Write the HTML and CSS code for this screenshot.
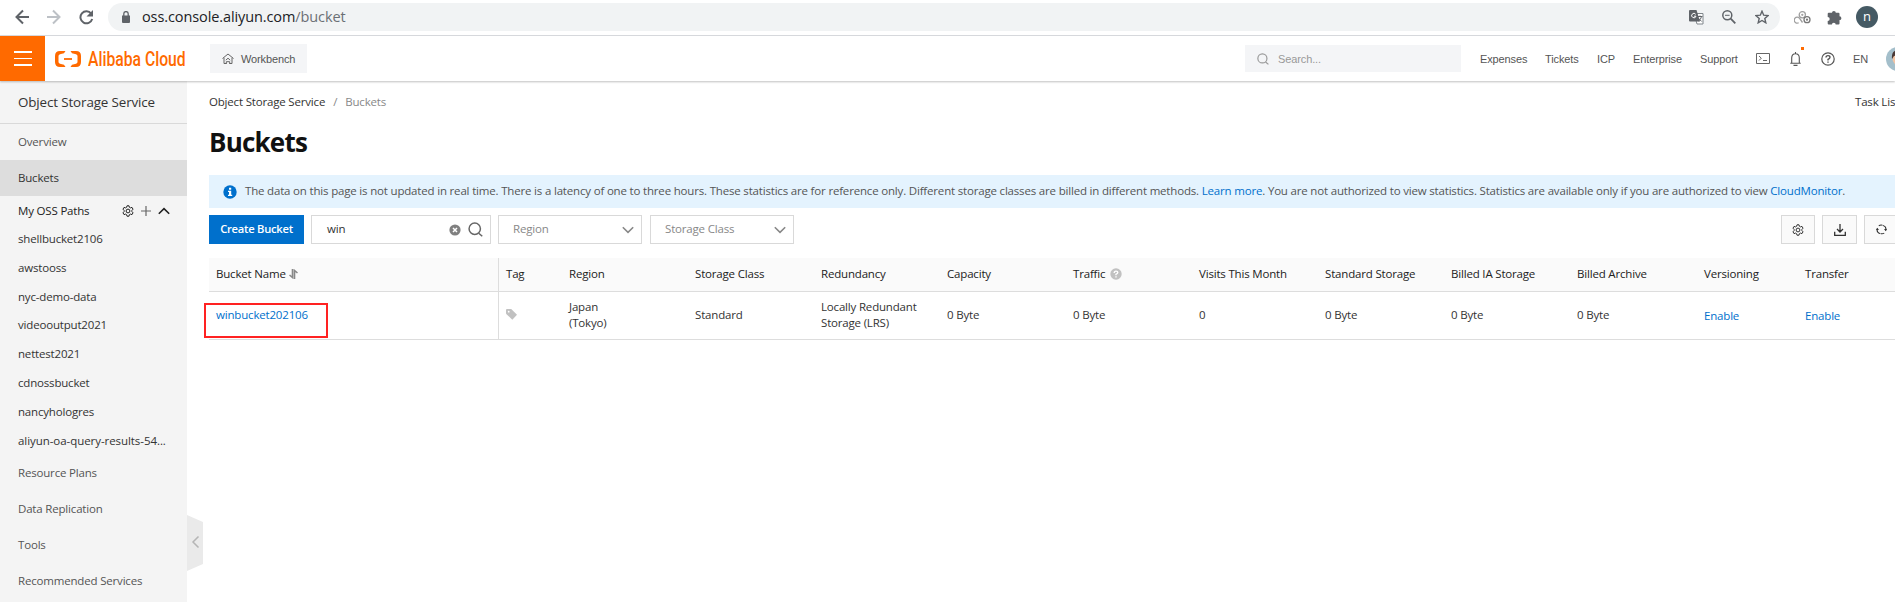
FILE: index.html
```html
<!DOCTYPE html>
<html lang="en">
<head>
<meta charset="utf-8">
<title>Object Storage Service</title>
<link rel="stylesheet" href="styles.css">
</head>
<body>
<svg class="defs" width="0" height="0">
  <symbol id="gear" viewBox="0 0 12 12"><path fill="none" stroke="currentColor" stroke-width="1" stroke-linejoin="round" d="M5 .8h2l.4 1.5 1 .6 1.600-.5 1 1.800L9.900 5.400v1.200L11 7.800l-1 1.800-1.600-.5-1 .6L7 11.200H5l-.4-1.500-1-.6-1.600.5-1-1.800 1.100-1.200V5.400L1 4.200l1-1.800 1.600.5 1-.6z"/><circle cx="6" cy="6" r="1.900" fill="none" stroke="currentColor" stroke-width="1"/></symbol>
  <symbol id="chev" viewBox="0 0 12 8"><path fill="none" stroke="currentColor" stroke-width="1.600" d="M.8 1.200 6 6.400l5.200-5.200"/></symbol>
  <symbol id="search" viewBox="0 0 14 14"><circle cx="6.300" cy="6.300" r="5.300" fill="none" stroke="currentColor" stroke-width="1.400"/><path stroke="currentColor" stroke-width="1.400" d="m10 10.500 3.300 2.800"/></symbol>
</svg>

<div class="browser">
  <svg class="nav" width="80" height="16" viewBox="0 0 80 16" fill="none" stroke="#5f6368" stroke-width="2">
    <path d="M15 8H2.800M9 1.500 2.500 8 9 14.500"/>
    <path stroke="#bdc1c6" d="M33 8h12.200M39 1.500 45.500 8 39 14.500"/>
    <path d="M77.200 4.600A6 6 0 1 0 78.200 10"/><path fill="#5f6368" stroke="none" d="M79 1v6.500h-6.500z"/>
  </svg>
  <div class="address">
    <svg width="8" height="12" viewBox="0 0 8 12"><path fill="#5f6368" d="M0 4.500h8V11q0 1-1 1H1q-1 0-1-1z"/><path fill="none" stroke="#5f6368" stroke-width="1.300" d="M1.800 5V2.800a2.200 2.200 0 0 1 4.400 0V5"/></svg>
    <span class="url">oss.console.aliyun.com<i>/bucket</i></span>
    <svg class="translate" width="15" height="15" viewBox="0 0 15 15"><path fill="#fff" stroke="#80868b" d="M5 3.500h9v10.500H8z"/><path fill="#5f6368" d="M1 0h6.500L11 11.500H1q-1 0-1-1V1q0-1 1-1z"/><path fill="none" stroke="#fff" d="M6.700 4.300a2.200 2.200 0 1 0 .3 1.900H5"/><path fill="none" stroke="#5f6368" d="M8.500 6.500h5M11 5.500v1M12.500 6.500q-.5 3-3 4.500M9.700 8.500l3 3"/></svg>
    <svg class="zoomout" width="14" height="14" viewBox="0 0 14 14" fill="none" stroke="#5f6368"><circle cx="5.300" cy="5.300" r="4.500" stroke-width="1.500"/><path stroke-width="1.800" d="m8.700 8.700 4.600 4.600"/><path d="M3 5.300h4.600"/></svg>
    <svg class="star" width="14" height="14" viewBox="0 0 14 14"><path fill="none" stroke="#5f6368" stroke-width="1.400" d="m7 1.200 1.700 4 4.400.4-3.300 2.900 1 4.300L7 10.500l-3.800 2.300 1-4.300L.9 5.600l4.400-.4z"/></svg>
  </div>
  <svg class="ext" width="17" height="13" viewBox="0 0 17 13" fill="none" stroke="#a0a0a0" stroke-width="1.300"><circle cx="8.300" cy="3.800" r="3.100"/><path d="M4.700 11.800A3 3 0 1 1 6 8l2.500 3.500"/><circle cx="13" cy="8.700" r="3" stroke="#777"/><circle cx="8.300" cy="3.800" r=".5"/><circle cx="13" cy="8.700" r=".5" stroke="#777"/></svg>
  <svg class="puzzle" width="15" height="15" viewBox="0 0 15 15"><path fill="#5f6368" d="M5 2.800a1.900 1.900 0 0 1 3.800 0h2.700q1 0 1 1v2.500a1.900 1.900 0 0 1 0 3.800v3.500q0 1-1 1H8.700a1.900 1.900 0 0 0-3.800 0H1.700q-1 0-1-1v-2.700a2 2 0 0 0 0-4V3.800q0-1 1-1z"/></svg>
  <span class="profile">n</span>
</div>

<header class="top">
  <div class="burger"><i></i><i></i><i></i></div>
  <svg class="mark" width="26" height="16" viewBox="0 0 26 16"><path fill="#ff6a00" d="M10.500 0 9 2.300 5 3.300Q3.500 3.700 3.500 5v6q0 1.300 1.500 1.700l4 1L10.500 16H5q-5 0-5-5V5q0-5 5-5zM15.500 0 17 2.300l4 1q1.500.4 1.500 1.700v6q0 1.300-1.500 1.700l-4 1-1.500 2.300H21q5 0 5-5V5q0-5-5-5z"/><path stroke="#ff6a00" stroke-width="1.800" d="M9 8h8"/></svg>
  <div class="brand"><span>Alibaba Cloud</span></div>
  <div class="workbench">
    <svg width="12" height="12" viewBox="0 0 12 12" fill="none" stroke="#666"><path d="M.5 5.500 6 1l5.500 4.500M2 4.800v5.700h2.200M10 4.800v5.700H7.800"/><path d="M3.800 7.200 6 5.200l2.200 2M4.300 11V8.700h3.400V11"/></svg>
    <span>Workbench</span>
  </div>
  <div class="searchbar"><svg width="12" height="12"><use href="#search"/></svg><span>Search...</span></div>
  <nav class="links"><span class="l1">Expenses</span><span class="l2">Tickets</span><span class="l3">ICP</span><span class="l4">Enterprise</span><span class="l5">Support</span></nav>
  <svg class="term" width="14" height="11" viewBox="0 0 14 11" fill="none" stroke="#666"><path d="M.5.500h13v10H.5zM3 3l2.300 2.200L3 7.500M7 7.500h4"/></svg>
  <div class="bell"><svg width="11" height="14" viewBox="0 0 11 14" fill="none" stroke="#555" stroke-width="1.100"><path d="M5.500 0v1.500M.3 11.200h10.400M1.700 11V6q0-4.300 3.800-4.300T9.300 6v5M3.500 13.400h4"/></svg><b></b></div>
  <svg class="help" width="14" height="14" viewBox="0 0 14 14" fill="none" stroke="#555" stroke-width="1.200"><circle cx="7" cy="7" r="6.200"/><path stroke-width="1.400" d="M5 5.600q0-2 2-2t2 1.700Q9 6.500 7 7.500v1M7 9.500v1.300"/></svg>
  <span class="lang">EN</span>
  <svg class="avatar" width="24" height="24" viewBox="0 0 24 24"><circle cx="12" cy="12" r="12" fill="#a4bfcb"/><circle cx="13" cy="12" r="6.500" fill="#f2c4a4"/><path fill="#4a3835" d="M6 12Q5 3 13 3t7 6q-9-1-12 0z"/></svg>
</header>

<div class="body">
  <aside class="side">
    <div class="product">Object Storage Service</div>
    <div class="item">Overview</div>
    <div class="item active">Buckets</div>
    <div class="paths"><span>My OSS Paths</span>
      <svg class="g" width="12" height="12"><use href="#gear"/></svg>
      <svg class="plus" width="10" height="10" viewBox="0 0 10 10"><path stroke="#666" stroke-width="1.200" d="M0 5h10M5 0v10"/></svg>
      <svg class="up" width="12" height="8"><use href="#chev"/></svg>
    </div>
    <div class="sub">shellbucket2106</div>
    <div class="sub">awstooss</div>
    <div class="sub">nyc-demo-data</div>
    <div class="sub">videooutput2021</div>
    <div class="sub">nettest2021</div>
    <div class="sub">cdnossbucket</div>
    <div class="sub">nancyhologres</div>
    <div class="sub long">aliyun-oa-query-results-54...</div>
    <div class="item">Resource Plans</div>
    <div class="item">Data Replication</div>
    <div class="item">Tools</div>
    <div class="item">Recommended Services</div>
  </aside>
  <svg class="collapse" width="16" height="56" viewBox="0 0 16 56"><path fill="#eaeaea" d="m0 0 16 7v42L0 56z"/><path fill="none" stroke="#b5b5b5" stroke-width="1.500" d="m11.500 21.500-5.500 5.500 5.500 5.500"/></svg>

  <main class="main">
    <div class="crumbrow">
      <div class="crumbs"><span>Object Storage Service</span><i>/</i><em>Buckets</em></div>
      <span class="tasks">Task List</span>
    </div>
    <h1>Buckets</h1>
    <div class="notice">
      <svg width="14" height="14" viewBox="0 0 14 14"><circle cx="7" cy="7" r="6.700" fill="#0070cc"/><path fill="#fff" d="M6 2.700h2.200v2H6zM5 5.800h3.200v4h1V11H5V9.800h1V7H5z"/></svg>
      <span>The data on this page is not updated in real time. There is a latency of one to three hours. These statistics are for reference only. Different storage classes are billed in different methods. <a>Learn more</a>. You are not authorized to view statistics. Statistics are available only if you are authorized to view <a>CloudMonitor</a>.</span>
    </div>
    <div class="tools">
      <div class="create">Create Bucket</div>
      <div class="field find"><span>win</span>
        <svg class="clear" width="12" height="12" viewBox="0 0 12 12"><circle cx="6" cy="6" r="5.600" fill="#808080"/><path stroke="#fff" stroke-width="1.500" d="m4 4 4 4m0-4L4 8"/></svg>
        <svg class="mag" width="15" height="15"><use href="#search"/></svg>
      </div>
      <div class="field select region"><span>Region</span><svg width="12" height="8"><use href="#chev"/></svg></div>
      <div class="field select"><span>Storage Class</span><svg width="12" height="8"><use href="#chev"/></svg></div>
      <div class="square first"><svg width="12" height="12"><use href="#gear"/></svg></div>
      <div class="square mid"><svg width="12" height="12" viewBox="0 0 12 12" fill="none" stroke="#333" stroke-width="1.300"><path d="M6 0v8M3 5l3 3 3-3M.7 7.800v3.500h10.600V7.800"/></svg></div>
      <div class="square"><svg width="11" height="11" viewBox="0 0 12 12" fill="none" stroke="#333" stroke-width="1.100"><path d="M7.500 1.500A4.700 4.700 0 0 1 10.700 7M9 10a4.700 4.700 0 0 1-4 .5M4.500 10.500A4.700 4.700 0 0 1 1.300 5M3 2a4.700 4.700 0 0 1 4-.6"/><path fill="#333" stroke="none" d="M8.800 5.500H12L10.500 8zM0 6.500h3.200L1.500 4z"/></svg></div>
    </div>
    <div class="grid head">
      <div class="name">Bucket Name <svg width="9" height="10" viewBox="0 0 9 10" fill="none" stroke="#888" stroke-width="1.600"><path d="M3.500 0v8.500L.5 6M5.500 10V1.500l3 2.500"/></svg></div>
      <div>Tag</div><div>Region</div><div>Storage Class</div><div>Redundancy</div><div>Capacity</div>
      <div>Traffic <svg class="q" width="12" height="12" viewBox="0 0 12 12" fill="none"><circle cx="6" cy="6" r="5.700" fill="#c1c1c1"/><path stroke="#fff" stroke-width="1.400" d="M4.200 4.900q0-1.800 1.800-1.800t1.800 1.500Q7.800 5.600 6 6.300v1M6 8.200v1.300"/></svg></div>
      <div>Visits This Month</div><div>Standard Storage</div><div>Billed IA Storage</div><div>Billed Archive</div><div>Versioning</div><div>Transfer</div>
    </div>
    <div class="grid row">
      <div class="name"><a>winbucket202106</a><b class="mark-box"></b></div>
      <div><svg width="11" height="11" viewBox="0 0 11 11"><path fill="#c1c1c1" d="M0 1q0-1 1-1h4.200L11 5.800 6.300 10.700.500 5.200Q0 4.800 0 4z"/><circle cx="2.700" cy="2.700" r=".9" fill="#fff"/></svg></div>
      <div>Japan<br>(Tokyo)</div><div>Standard</div><div>Locally Redundant<br>Storage (LRS)</div><div>0 Byte</div><div>0 Byte</div><div>0</div><div>0 Byte</div><div>0 Byte</div><div>0 Byte</div><div class="act"><a>Enable</a></div><div class="act"><a>Enable</a></div>
    </div>
  </main>
</div>
</body>
</html>
```
FILE: styles.css
```css
* { box-sizing: border-box; }
html, body { height: 100%; }
body { margin: 0; overflow: hidden; background: #fff; color: #333; font: 11.5px/16px "Open Sans", "Noto Sans", sans-serif; letter-spacing: -.18px; display: flex; flex-direction: column; white-space: nowrap; }
svg { display: block; flex: none; }
.defs { position: absolute; }
i, em { font-style: normal; }
a { color: #0070cc; }

.browser { height: 36px; flex: none; display: flex; align-items: center; border-bottom: 1px solid #dadce0; padding: 0 0 1px 14px; }
.nav { margin-right: 14px; }
.address { width: 1672px; flex: none; height: 28px; border-radius: 14px; background: #f1f3f4; display: flex; align-items: center; padding-left: 14px; }
.url { font-size: 14.5px; letter-spacing: -.1px; line-height: 20px; color: #202124; margin: 0 auto 0 12px; }
.url i { color: #6b6f74; }
.zoomout { margin: 0 19px 0 18px; }
.star { margin-right: 11px; }
.ext { margin-left: 14px; }
.puzzle { margin-left: 16px; }
.profile { width: 22px; height: 22px; border-radius: 50%; background: #455a64; color: #fff; font-size: 13px; line-height: 20px; text-align: center; margin-left: 14px; }

.top { height: 45px; flex: none; display: flex; align-items: center; background: #fff; position: relative; z-index: 2; box-shadow: 0 1px 2px rgba(0,0,0,.25); font: 11px/16px "Liberation Sans", Arial, sans-serif; letter-spacing: -.12px; color: #555; }
.top > * { flex: none; }
.burger { width: 45px; height: 45px; background: #ff6a00; display: flex; flex-direction: column; justify-content: center; align-items: center; gap: 5px; }
.burger i { width: 18px; height: 1.500px; background: #fff; }
.mark { margin-left: 10px; }
.brand { width: 98px; margin-left: 7px; }
.brand span { display: inline-block; font: 500 20px/24px Roboto, sans-serif; letter-spacing: 0; color: #ff6a00; transform: scaleX(.785); transform-origin: 0 50%; }
.workbench { width: 97px; height: 29px; margin-left: 24px; background: #f4f5f7; display: flex; align-items: center; padding-left: 12px; gap: 7px; }
.searchbar { width: 216px; height: 27px; margin-left: 938px; background: #f4f5f7; color: #999; display: flex; align-items: center; padding-left: 12px; gap: 9px; }
.links { display: flex; }
.links span { flex: none; }
.l1 { margin-left: 19px; width: 65px; }
.l2 { width: 52px; }
.l3 { width: 36px; }
.l4 { width: 67px; }
.l5 { width: 56px; }
.bell { position: relative; margin-left: 20px; }
.bell b { position: absolute; width: 3px; height: 3px; right: -3px; top: -5px; background: #ff6a00; }
.help { margin-left: 20px; }
.lang { margin-left: 18px; width: 33px; }

.body { flex: 1; min-height: 0; display: flex; position: relative; }
.side { width: 187px; flex: none; background: #f4f4f4; overflow: hidden; }
.product { height: 43px; border-bottom: 1px solid #d9d9d9; padding-left: 18px; font-size: 13.4px; letter-spacing: -.13px; line-height: 42px; }
.item { height: 36px; line-height: 36px; padding-left: 18px; color: #555; }
.active { background: #ddd; color: #333; }
.paths { height: 29px; padding-left: 18px; display: flex; align-items: center; color: #222; }
.paths span { width: 104px; }
.plus { margin: 0 7px; }
.up { transform: rotate(180deg); }
.sub { height: 28.800px; line-height: 28.800px; padding-left: 18px; }
.long { letter-spacing: -.06px; }
.collapse { position: absolute; left: 187px; top: 434px; }

.main { flex: 1; min-width: 0; overflow: hidden; padding-left: 22px; }
.crumbrow { height: 43px; display: flex; align-items: center; justify-content: space-between; padding-bottom: 2px; }
.crumbs { display: flex; }
.crumbs i { margin: 0 8px; color: #888; }
.crumbs em { color: #888; }
.tasks { width: 40px; }
h1 { margin: 0; height: 51px; font-size: 26px; line-height: 37px; letter-spacing: -.8px; color: #111; }
.notice { height: 33px; background: #e4f3fe; display: flex; align-items: center; padding-left: 14px; gap: 8px; color: #555; }
.notice span { padding-bottom: 2px; }
.tools { display: flex; margin-top: 7px; height: 29px; width: 1690px; }
.create { width: 95px; background: #0070cc; color: #fff; font-weight: 600; text-align: center; line-height: 27px; font-size: 11.200px; letter-spacing: -.25px; }
.field { border: 1px solid #d9d9d9; height: 29px; display: flex; align-items: center; margin-left: 7px; }
.field span { padding-bottom: 1px; }
.find { width: 180px; padding-left: 15px; }
.clear { margin-left: auto; }
.mag { margin: 0 7px; color: #666; }
.select { width: 144px; padding: 0 7px 0 14px; margin-left: 8px; justify-content: space-between; color: #888; }
.region { margin-left: 7px; }
.square { width: 35px; height: 29px; flex: none; border: 1px solid #d9d9d9; background: #fafafa; display: flex; align-items: center; justify-content: center; margin-left: 7px; }
.first { margin-left: auto; width: 34px; }
.grid { display: grid; grid-template-columns: 290px 63px 126px 126px 126px 126px 126px 126px 126px 126px 127px 101px 97px; width: 1686px; border-bottom: 1px solid #ddd; }
.grid > div { display: flex; align-items: center; padding: 0 0 2px 7px; gap: 4px; }
.grid > .name { border-right: 1px solid #ddd; position: relative; }
.name svg { margin-left: -1px; }
.head { margin-top: 14px; height: 34px; background: #fafafa; color: #222; }
.q { margin: 1px 0 0 1px; }
.row { height: 48px; }
.grid > .act { padding-bottom: 0; }
.mark-box { position: absolute; left: -5px; top: 11px; width: 124px; height: 35px; border: 2px solid #f22; }
```
